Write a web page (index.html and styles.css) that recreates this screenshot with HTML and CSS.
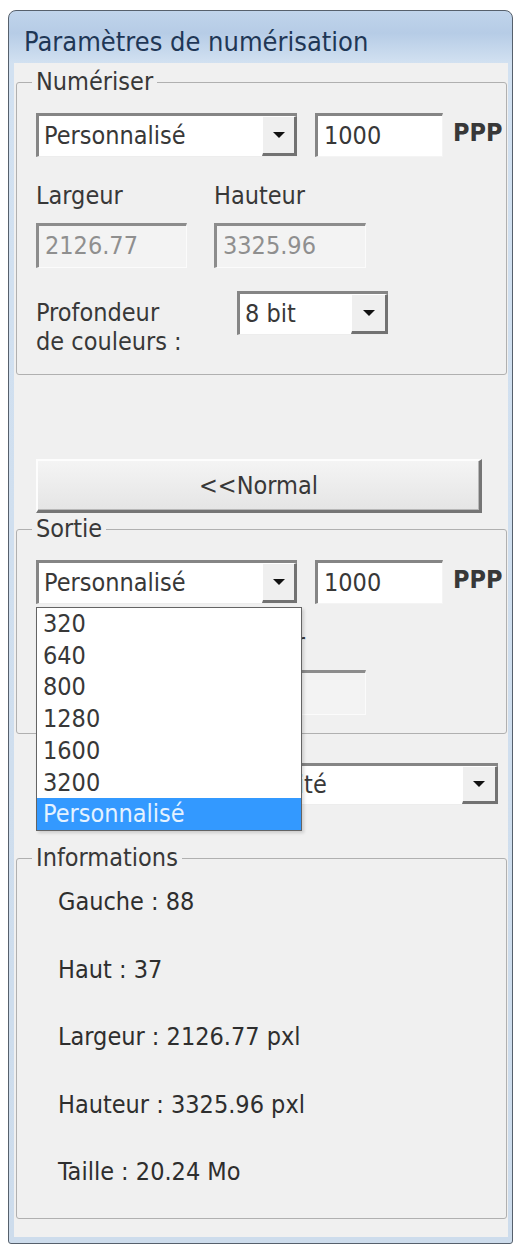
FILE: index.html
```html
<!DOCTYPE html>
<html lang="fr">
<head>
    <meta charset="UTF-8">
    <meta name="viewport" content="width=device-width, initial-scale=1.0">
    <title>Paramètres de numérisation</title>
    <link rel="stylesheet" href="styles.css">
</head>
<body>

<div class="window">
    <div class="titlebar">Paramètres de numérisation</div>

    <div class="client">
        <fieldset class="group">
            <legend>Numériser</legend>
            <div class="res-row">
                <div class="combo combo-res">
                    <span class="combo-text">Personnalisé</span>
                    <span class="combo-btn"><span class="tri"></span></span>
                </div>
                <div class="field field-dpi">1000</div>
                <span class="unit">PPP</span>
            </div>
            <div class="size-labels">
                <span>Largeur</span>
                <span>Hauteur</span>
            </div>
            <div class="size-fields">
                <div class="field disabled">2126.77</div>
                <div class="field disabled">3325.96</div>
            </div>
            <div class="depth-row">
                <div class="depth-label">Profondeur<br>de couleurs :</div>
                <div class="combo combo-depth">
                    <span class="combo-text">8 bit</span>
                    <span class="combo-btn"><span class="tri"></span></span>
                </div>
            </div>
        </fieldset>

        <button class="btn-normal">&lt;&lt;Normal</button>

        <fieldset class="group">
            <legend>Sortie</legend>
            <div class="res-row">
                <div class="combo-wrap">
                    <div class="combo combo-res">
                        <span class="combo-text">Personnalisé</span>
                        <span class="combo-btn"><span class="tri"></span></span>
                    </div>
                    <!-- open list of the output combo -->
                    <ul class="droplist">
                        <li>320</li>
                        <li>640</li>
                        <li>800</li>
                        <li>1280</li>
                        <li>1600</li>
                        <li>3200</li>
                        <li class="sel">Personnalisé</li>
                    </ul>
                </div>
                <div class="field field-dpi">1000</div>
                <span class="unit">PPP</span>
            </div>
            <div class="size-labels">
                <span></span>
                <span>Hauteur</span>
            </div>
            <div class="size-fields">
                <div class="field disabled"></div>
                <div class="field disabled"></div>
            </div>
        </fieldset>

        <div class="combo combo-quality">
            <span class="combo-text">Impression haute qualité</span>
            <span class="combo-btn"><span class="tri"></span></span>
        </div>

        <fieldset class="group group-info">
            <legend>Informations</legend>
            <div class="info-list">
                <span>Gauche : 88</span>
                <span>Haut : 37</span>
                <span>Largeur : 2126.77 pxl</span>
                <span>Hauteur : 3325.96 pxl</span>
                <span>Taille : 20.24 Mo</span>
            </div>
        </fieldset>
    </div>
</div>

</body>
</html>
```

FILE: styles.css
```css
* {
    box-sizing: border-box;
}

body {
    margin: 0;
    background-color: #fff;
    font-family: "DejaVu Sans Condensed", "DejaVu Sans", sans-serif;
    font-size: 25px;
    color: #383838;
}

.window {
    width: 505px;
    margin: 10px 0 0 8px;
    border: 1px solid #56606c;
    border-radius: 8px 8px 3px 3px;
    background: linear-gradient(180deg, #c0d4eb 0, #b6cce6 22px, #d2e1f1 52px, #cddcec 100%);
}

.titlebar {
    height: 52px;
    padding: 10px 0 0 15px;
    line-height: 42px;
    font-size: 27px;
    color: #1f3756;
}

.client {
    margin: 0 4px 6px 5px;
    padding: 7px 1px 18px 2px;
    background-color: #f0f0f0;
}

.group {
    margin: 0;
    min-width: 0;
    padding: 19px 19px 18px 19px;
    border: 1px solid #b0b0b0;
    border-radius: 3px;
}

.group legend {
    padding: 0 4px;
    margin-left: -4px;
    line-height: 24px;
}

.res-row {
    display: flex;
    align-items: flex-start;
    height: 44px;
}

.res-row > * {
    flex-shrink: 0;
}

.combo-wrap {
    position: relative;
}

.combo {
    display: flex;
    align-items: center;
    height: 44px;
    background-color: #fff;
    border-style: solid;
    border-width: 3px 0 1px 3px;
    border-color: #858585 #e6e6e6 #ededed #858585;
}

.combo-text {
    flex: 1;
    padding-left: 5px;
    white-space: nowrap;
    overflow: hidden;
    line-height: 40px;
}

.combo-btn {
    align-self: stretch;
    display: flex;
    align-items: center;
    justify-content: center;
    width: 35px;
    background-color: #efefef;
    border-style: solid;
    border-width: 1px 3px 3px 1px;
    border-color: #fff #727272 #727272 #fff;
}

.tri {
    width: 0;
    height: 0;
    border-left: 6px solid transparent;
    border-right: 6px solid transparent;
    border-top: 6px solid #111;
}

.combo-res {
    width: 261px;
}

.field {
    height: 44px;
    padding-left: 6px;
    line-height: 40px;
    background-color: #fff;
    border-style: solid;
    border-width: 3px 1px 1px 3px;
    border-color: #858585 #f4f4f4 #f4f4f4 #858585;
}

.field-dpi {
    width: 128px;
    margin-left: 18px;
}

.unit {
    margin-left: 10px;
    padding-top: 8px;
    line-height: 24px;
    font-weight: bold;
}

.field.disabled {
    height: 45px;
    color: #8f8f8f;
    background-color: #f3f3f3;
    border-color: #8c8c8c #fbfbfb #fbfbfb #8c8c8c;
}

.size-labels,
.size-fields {
    display: grid;
    grid-template-columns: 151px 152px;
    column-gap: 27px;
}

.size-labels {
    margin-top: 27px;
    line-height: 24px;
    min-height: 24px;
}

.size-fields {
    margin-top: 15px;
}

.depth-row {
    display: flex;
    margin-top: 23px;
}

.depth-label {
    width: 201px;
    margin-top: 7px;
    line-height: 29px;
}

.combo-depth {
    width: 151px;
}

.combo-depth .combo-btn {
    width: 37px;
}

.btn-normal {
    display: block;
    width: 446px;
    height: 54px;
    margin: 84px 0 4px 20px;
    padding: 0;
    font: inherit;
    color: #383838;
    background: linear-gradient(180deg, #f4f4f4, #e5e5e5);
    border-style: solid;
    border-width: 2px 3px 3px 2px;
    border-color: #fdfdfd #757575 #757575 #fdfdfd;
    box-shadow: inset -1px -1px 0 #b8b8b8;
}

.droplist {
    position: absolute;
    top: calc(100% + 3px);
    left: 0;
    z-index: 2;
    width: 266px;
    margin: 0;
    padding: 0;
    list-style: none;
    background-color: #fff;
    border: 1px solid #646464;
    box-shadow: 2px 2px 3px rgba(0, 0, 0, 0.15);
}

.droplist li {
    padding-left: 6px;
    line-height: 31.7px;
}

.droplist .sel {
    background-color: #3399ff;
    color: #e4f2ff;
}

.combo-quality {
    width: 462px;
    height: 42px;
    margin: 29px 0 0 20px;
}

.combo-quality .combo-text {
    padding-left: 8px;
    line-height: 38px;
}

.combo-quality .combo-btn {
    width: 36px;
}

.group-info {
    margin-top: 41px;
    padding-top: 20px;
    padding-bottom: 34px;
}

.info-list {
    display: flex;
    flex-direction: column;
    gap: 43.5px;
    margin-left: 22px;
    line-height: 24px;
    color: #2e2e2e;
}
```
